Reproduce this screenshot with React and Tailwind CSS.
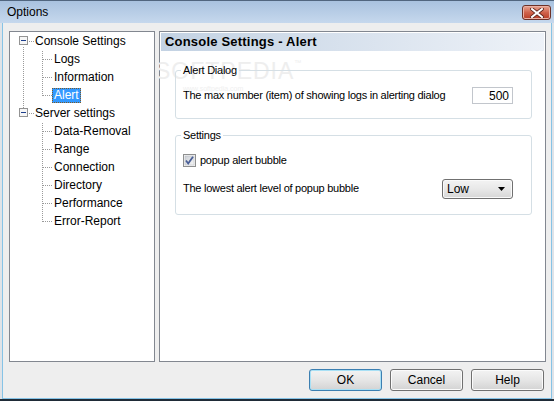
import React from "react";

const DOT = "#9a9a9a";

function dots(x1, y1, x2, y2, key) {
  const out = [];
  if (x1 === x2) {
    for (let y = y1; y <= y2; y++)
      if (y % 2 === 1) out.push(<rect key={key + "v" + y} x={x1} y={y} width="1" height="1" fill={DOT} />);
  } else {
    for (let x = x1; x <= x2; x++)
      if (x % 2 === 1) out.push(<rect key={key + "h" + x} x={x} y={y1} width="1" height="1" fill={DOT} />);
  }
  return out;
}

function TopRow({ label, prev, next }) {
  return (
    <div className="flex h-[18px] items-center">
      <svg width="24" height="18" className="shrink-0">
        {prev && dots(13, 0, 13, 4, "p")}
        {next && dots(13, 14, 13, 17, "n")}
        {dots(18, 9, 23, 9, "h")}
        <rect x="9.5" y="4.5" width="8" height="8" fill="#f6f6f6" stroke="#939393" />
        <rect x="11" y="8" width="5" height="1" fill="#1d3f8c" />
      </svg>
      <span className="px-[1px] text-[12px] leading-[16px] text-black">{label}</span>
    </div>
  );
}

function ChildRow({ label, parentNext, last, selected }) {
  return (
    <div className="flex h-[18px] items-center">
      <svg width="42" height="18" className="shrink-0">
        {parentNext && dots(13, 0, 13, 17, "a")}
        {dots(32, 0, 32, last ? 9 : 17, "b")}
        {dots(33, 9, 41, 9, "c")}
      </svg>
      <span
        className={
          selected
            ? "px-[2px] text-[12px] leading-[15px] text-white bg-[#3399ff] outline-1 outline-dotted outline-[#7a5a2a] -outline-offset-1"
            : "px-[2px] text-[12px] leading-[15px] text-black"
        }
      >
        {label}
      </span>
    </div>
  );
}

function Checkbox() {
  return (
    <svg width="13" height="13" className="shrink-0">
      <defs>
        <linearGradient id="cbg" x1="0" y1="0" x2="1" y2="1">
          <stop offset="0" stopColor="#cbcfd5" />
          <stop offset="1" stopColor="#f6f6f6" />
        </linearGradient>
      </defs>
      <rect x="0.5" y="0.5" width="12" height="12" fill="#f4f4f4" stroke="#8e8f8f" />
      <rect x="2" y="2" width="9" height="9" fill="url(#cbg)" stroke="#b4b8bf" strokeWidth="0.5" />
      <path d="M3 6.5 L5.2 9.5 L10 2.8" fill="none" stroke="#4a5f97" strokeWidth="1.8" />
    </svg>
  );
}

function Btn({ children, primary }) {
  return (
    <div
      className={
        "flex h-[22px] w-[73px] items-center justify-center rounded-[3px] border bg-linear-to-b from-[#f3f3f3] via-[#e6e6e6] to-[#d3d3d3] text-[12px] text-black " +
        (primary
          ? "border-[#3c7fb1] shadow-[inset_0_0_0_1px_#a8e0f5]"
          : "border-[#707070] shadow-[inset_0_0_0_1px_#fbfbfb]")
      }
    >
      {children}
    </div>
  );
}

export default function App() {
  return (
    <div className="relative flex h-[401px] w-[554px] flex-col overflow-hidden border-t border-[#51667f] bg-[#dfe3e8] font-['Liberation_Sans',Arial,sans-serif]">
      {/* title bar */}
      <div className="flex h-[22px] shrink-0 items-center justify-between bg-linear-to-b from-[#a9c2df] to-[#c6d8ed] pl-[7px] pr-[3px]">
        <span className="text-[12px] text-black">Options</span>
        <div className="mt-[1px] flex h-[15px] w-[29px] items-center justify-center rounded-[3px] border border-[#6c3127] bg-linear-to-b from-[#e6a593] via-[#d0634c] to-[#b83c25] shadow-[inset_0_0_0_1px_#eab1a4]">
          <svg width="14" height="10" viewBox="0 0 14 10">
            <path d="M2 1 L12 9 M12 1 L2 9" stroke="#5a2219" strokeWidth="3.6" strokeLinecap="square" />
            <path d="M2 1 L12 9 M12 1 L2 9" stroke="#ffffff" strokeWidth="2" strokeLinecap="square" />
          </svg>
        </div>
      </div>

      {/* frame + body */}
      <div className="flex flex-1 flex-col border-b-2 border-[#1f2b37] px-[2px]">
        <div className="flex flex-1 flex-col border-x border-b border-[#86c3e6] bg-[#eeeeee] pl-[6px] pr-[5px] pt-[8px] pb-[6px]">
          <div className="flex h-[331px] gap-[4px]">
            {/* tree */}
            <div className="w-[146px] border border-[#828790] bg-white">
              <TopRow label="Console Settings" next />
              <ChildRow label="Logs" parentNext />
              <ChildRow label="Information" parentNext />
              <ChildRow label="Alert" parentNext last selected />
              <TopRow label="Server settings" prev />
              <ChildRow label="Data-Removal" />
              <ChildRow label="Range" />
              <ChildRow label="Connection" />
              <ChildRow label="Directory" />
              <ChildRow label="Performance" />
              <ChildRow label="Error-Report" last />
            </div>

            {/* right panel */}
            <div className="relative flex w-[387px] flex-col border border-[#828790] bg-white p-[1px]">
              {/* watermark, drawn under the content */}
              <div className="pointer-events-none absolute left-[-5px] top-[26px] whitespace-nowrap text-[23px] leading-[26px] tracking-[1px] text-[#eeeeee]">
                SOFTPEDIA<span className="align-top text-[7px] leading-[10px]">™</span>
              </div>
              <div className="pointer-events-none absolute left-[23px] top-[53px] whitespace-nowrap text-[7px] leading-[8px] text-[#efefef]">
                www.softpedia.com
              </div>

              <div className="relative flex h-[18px] items-center bg-linear-to-r from-[#c3d2e3] to-[#eef2f8] pl-[4px]">
                <span className="text-[13px] font-bold tracking-[0.2px] text-black">Console Settings - Alert</span>
              </div>

              <div className="relative flex flex-1 flex-col pl-[14px] pr-[12px] text-[11px] tracking-[-0.25px] text-black">
                <fieldset className="mt-[12px] rounded-[3px] border border-[#d5dfe5] pb-[14px]">
                  <legend className="ml-[5px] px-[2px] leading-[14px]">Alert Dialog</legend>
                  <div className="mt-[10px] flex items-center justify-between pl-[7px] pr-[18px]">
                    <span>The max number (item) of showing logs in alerting dialog</span>
                    <div className="flex h-[17px] w-[41px] items-center justify-end border border-[#c2c6cc] bg-white pr-[3px] text-[12px] tracking-normal">
                      500
                    </div>
                  </div>
                </fieldset>

                <fieldset className="mt-[9px] rounded-[3px] border border-[#d5dfe5] pb-[15px]">
                  <legend className="ml-[5px] px-[2px] leading-[14px]">Settings</legend>
                  <div className="mt-[10px] flex items-center gap-[4px] pl-[7px]">
                    <Checkbox />
                    <span>popup alert bubble</span>
                  </div>
                  <div className="mt-[10px] flex items-center justify-between pl-[7px] pr-[18px]">
                    <span>The lowest alert level of popup bubble</span>
                    <div className="flex h-[20px] w-[71px] items-center justify-between rounded-[3px] border border-[#707070] bg-linear-to-b from-[#f3f3f3] via-[#e8e8e8] to-[#d6d6d6] pl-[4px] pr-[7px] text-[12px] tracking-normal shadow-[inset_0_0_0_1px_#fafafa]">
                      <span>Low</span>
                      <svg width="7" height="4" viewBox="0 0 7 4">
                        <path d="M0 0 H7 L3.5 4 Z" fill="#000" />
                      </svg>
                    </div>
                  </div>
                </fieldset>
              </div>
            </div>
          </div>

          <div className="mt-[7px] flex justify-end gap-[8px] pr-[2px]">
            <Btn primary>OK</Btn>
            <Btn>Cancel</Btn>
            <Btn>Help</Btn>
          </div>
        </div>
      </div>
    </div>
  );
}
